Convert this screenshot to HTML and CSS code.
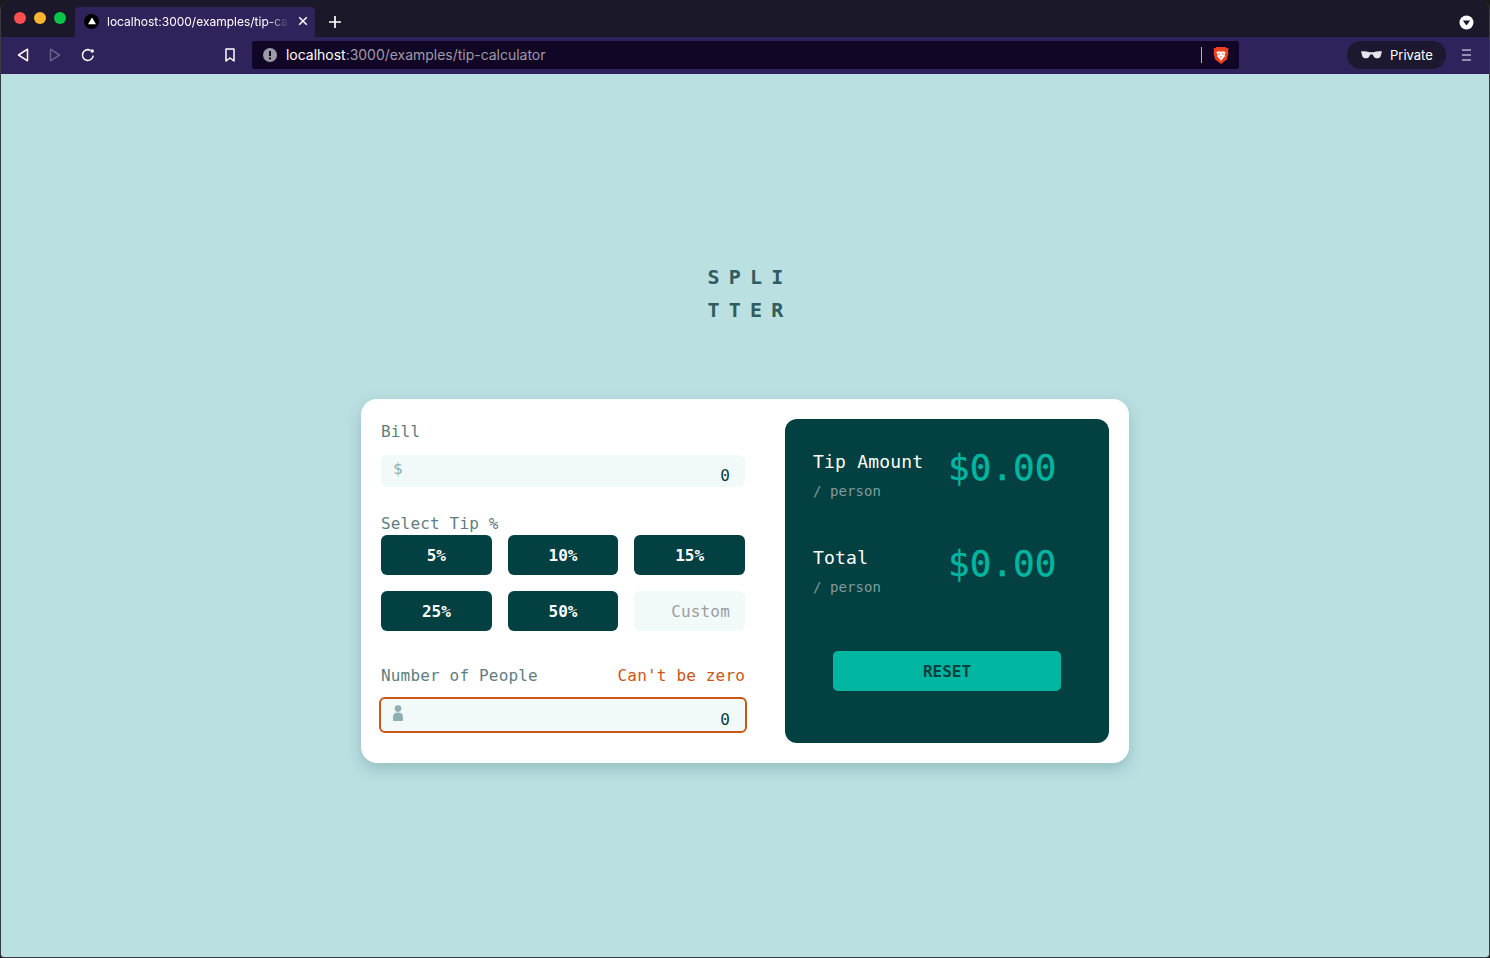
FILE: index.html
```html
<!DOCTYPE html>
<html lang="en">
<head>
    <meta charset="UTF-8">
    <meta name="viewport" content="width=device-width, initial-scale=1.0">
    <title>Tip Calculator</title>
    <link rel="stylesheet" href="styles.css">
</head>
<body>
    <div class="window">
        <div class="tabstrip">
            <div class="lights">
                <span class="light red"></span>
                <span class="light yellow"></span>
                <span class="light green"></span>
            </div>
            <div class="tab">
                <span class="favicon"><svg width="10" height="10" viewBox="0 0 10 10"><path d="M5 1.6 9 8.2H1z" fill="#fff"/></svg></span>
                <span class="tab-title">localhost:3000/examples/tip-ca</span>
                <svg class="tab-close" width="10" height="10" viewBox="0 0 10 10"><path d="M1.2 1.2l7.6 7.6M8.8 1.2L1.2 8.8" stroke="#fff" stroke-width="1.5"/></svg>
            </div>
            <svg class="new-tab" width="12" height="12" viewBox="0 0 12 12"><path d="M6 0v12M0 6h12" stroke="#fff" stroke-width="1.7"/></svg>
            <svg class="tab-menu" width="15" height="15" viewBox="0 0 15 15"><circle cx="7.5" cy="7.5" r="7" fill="#fff"/><path d="M3.8 5.6h7.4L7.5 10.6z" fill="#1b1829"/></svg>
        </div>

        <div class="toolbar">
            <div class="nav">
                <svg width="12" height="14" viewBox="0 0 12 14"><path d="M10.5 1.2v11.6L1.5 7z" fill="none" stroke="#fff" stroke-width="1.5" stroke-linejoin="round"/></svg>
                <svg width="12" height="14" viewBox="0 0 12 14"><path d="M1.5 1.2v11.6L10.5 7z" fill="none" stroke="#6a5f87" stroke-width="1.5" stroke-linejoin="round"/></svg>
                <svg width="14" height="14" viewBox="0 0 14 14"><path d="M12.2 7.6A5.4 5.400 0 1 1 9.400 2.300" fill="none" stroke="#fff" stroke-width="1.5"/><circle cx="11.200" cy="3" r="1.800" fill="#fff"/></svg>
            </div>
            <svg class="bookmark" width="10" height="14" viewBox="0 0 10 14"><path d="M1 1h8v12L5 10l-4 3z" fill="none" stroke="#fff" stroke-width="1.5" stroke-linejoin="round"/></svg>
            <div class="urlbar">
                <svg width="14" height="14" viewBox="0 0 14 14"><circle cx="7" cy="7" r="7" fill="#9b9aa6"/><path d="M7 3v5" stroke="#120626" stroke-width="2"/><circle cx="7" cy="10.4" r="1.1" fill="#120626"/></svg>
                <span class="url"><span class="url-host">localhost</span>:3000/examples/tip-calculator</span>
                <span class="url-sep"></span>
                <svg width="16" height="19" viewBox="0 0 16 19"><path d="M3.4 1h9.2l1 1.3 1.9-.3-.5 3.2.5 1.800-1.700 6.400-3 2.400L8 18l-2.800-2.200-3-2.400L.5 7l.5-1.800L.5 2l1.900.3z" fill="#f0401f"/><path d="M3.200 6.200l2.600-1 2.200.6 2.200-.6 2.600 1-1.300 2.300.6 1.500L9.800 12.500 8 14.800 6.200 12.500 4.100 10l.6-1.500z" fill="#fff"/><path d="M5.400 8h1.600M9 8h1.600M8 10v1.500" stroke="#f0401f" stroke-width="1"/></svg>
            </div>
            <div class="private">
                <svg width="21" height="8" viewBox="0 0 21 8"><path d="M0 .5c3-.6 6 0 8.500.8h4c2.500-.8 5.500-1.400 8.500-.8l-1.500 5.200c-1.500 2-5 2.200-6.500.3l-1.300-2.500h-2.400L8 6C6.500 7.900 3 7.700 1.500 5.700z" fill="#e6e6ea"/></svg>
                <span>Private</span>
            </div>
            <svg class="hamburger" width="11" height="12" viewBox="0 0 11 12"><path d="M1 1h9M1 6h9M1 11h9" stroke="#b9b3cb" stroke-width="1.600"/></svg>
        </div>

        <main class="page">
            <h1 class="logo">SPLITTER</h1>

            <section class="card">
                <div class="form">
                    <label class="label bill-label">Bill</label>
                    <div class="field">
                        <span class="field-icon">$</span>
                        <span class="field-value">0</span>
                    </div>

                    <div class="label tip-label">Select Tip %</div>
                    <div class="tips">
                        <button class="tip">5%</button>
                        <button class="tip">10%</button>
                        <button class="tip">15%</button>
                        <button class="tip">25%</button>
                        <button class="tip">50%</button>
                        <div class="tip custom">Custom</div>
                    </div>

                    <div class="people-head">
                        <span class="label">Number of People</span>
                        <span class="error">Can't be zero</span>
                    </div>
                    <div class="field field-error">
                        <svg class="person" width="10" height="16" viewBox="0 0 10 16"><circle cx="5" cy="3.600" r="3.300" fill="#8fb0b2"/><path d="M0 15v-3.500C0 9 2 7.500 5 7.500s5 1.500 5 4V15c0 .6-.4 1-1 1H1c-.6 0-1-.4-1-1z" fill="#8fb0b2"/></svg>
                        <span class="field-value">0</span>
                    </div>
                </div>

                <div class="summary">
                    <div class="row">
                        <div class="row-label">
                            <div class="row-name">Tip Amount</div>
                            <div class="row-unit">/ person</div>
                        </div>
                        <div class="amount">$0.00</div>
                    </div>
                    <div class="row">
                        <div class="row-label">
                            <div class="row-name">Total</div>
                            <div class="row-unit">/ person</div>
                        </div>
                        <div class="amount">$0.00</div>
                    </div>
                    <button class="reset">RESET</button>
                </div>
            </section>
        </main>
    </div>
</body>
</html>
```
FILE: styles.css
```css
* {
    box-sizing: border-box;
}
html, body {
    margin: 0;
    height: 100%;
    background: #1a1a1a;
}
body {
    font-family: "DejaVu Sans Mono", "Liberation Mono", monospace;
    overflow: hidden;
}
.window {
    height: 958px;
    display: flex;
    flex-direction: column;
    border: 1px solid #3a3a40;
    border-top: 0;
    border-radius: 10px 10px 4px 4px;
    overflow: hidden;
}

/* browser chrome */
.tabstrip {
    height: 37px;
    flex: none;
    display: flex;
    align-items: flex-end;
    background: #1a1829;
    position: relative;
}
.lights {
    display: flex;
    gap: 8px;
    margin: 0 9px 13px 13px;
}
.light {
    width: 12px;
    height: 12px;
    border-radius: 50%;
}
.red { background: #fc4f4f; }
.yellow { background: #fdb52f; }
.green { background: #0ac648; }
.tab {
    width: 240px;
    height: 30px;
    display: flex;
    align-items: center;
    padding: 0 7px 2px 9px;
    background: #30225a;
    border-radius: 4px 4px 0 0;
    color: #fff;
    font: 12px Inter, "Liberation Sans", sans-serif;
}
.favicon {
    width: 15px;
    height: 15px;
    flex: none;
    display: flex;
    align-items: center;
    justify-content: center;
    background: #000;
    border-radius: 50%;
    margin-right: 8px;
}
.tab-title {
    flex: 1;
    white-space: nowrap;
    -webkit-mask-image: linear-gradient(to right, #000 88%, transparent);
    mask-image: linear-gradient(to right, #000 88%, transparent);
}
.tab-close {
    margin-left: 9px;
    flex: none;
}
.new-tab {
    margin: 0 0 9px 14px;
}
.tab-menu {
    position: absolute;
    right: 15px;
    top: 15px;
}
.toolbar {
    height: 37px;
    flex: none;
    display: flex;
    align-items: center;
    padding: 0 0 1px 16px;
    background: #30225a;
}
.nav {
    display: flex;
    align-items: center;
    gap: 20px;
    width: 208px;
}
.bookmark {
    flex: none;
}
.urlbar {
    width: 987px;
    height: 28px;
    margin-left: 17px;
    display: flex;
    align-items: center;
    padding: 0 10px 0 11px;
    background: #120626;
    border-radius: 3px;
}
.url {
    flex: 1;
    margin-left: 9px;
    font: 14px/17px Inter, "Liberation Sans", sans-serif;
    letter-spacing: -0.02px;
    color: #9f9ba8;
    padding-bottom: 1px;
}
.url-host {
    color: #fff;
}
.url-sep {
    width: 1px;
    height: 16px;
    background: #b5b3bd;
    margin-right: 11px;
}
.private {
    width: 99px;
    height: 28px;
    margin-left: 108px;
    display: flex;
    align-items: center;
    gap: 8px;
    padding-left: 14px;
    background: #1c1830;
    border-radius: 14px;
    color: #fff;
    font: 13px Inter, "Liberation Sans", sans-serif;
}
.hamburger {
    margin-left: 15px;
}

/* the calculator */
.page {
    flex: 1;
    display: flex;
    flex-direction: column;
    align-items: center;
    background: #bbe0e2;
}
.logo {
    width: 85px;
    margin: 187px 0 72px 10px;
    color: #2f5d60;
    font-size: 20px;
    line-height: 33px;
    font-weight: 700;
    letter-spacing: 9.2px;
    word-break: break-all;
}
.card {
    width: 768px;
    height: 364px;
    display: flex;
    justify-content: space-between;
    padding: 20px;
    background: #fff;
    border-radius: 16px;
    box-shadow: 0 6px 16px rgba(0, 70, 75, 0.22);
}
.form {
    width: 364px;
}
.label {
    color: #5f7d80;
    font-size: 16px;
    letter-spacing: 0.17px;
    line-height: 26px;
}
.bill-label {
    display: block;
}
.field {
    height: 32px;
    display: flex;
    justify-content: space-between;
    margin-top: 10px;
    padding: 0 15px 0 12px;
    background: #f2f9f9;
    border-radius: 6px;
}
.field-icon {
    color: #8fb0b2;
    font-size: 16px;
    line-height: 28px;
}
.field-value {
    color: #024042;
    font-size: 16px;
    line-height: 42px;
}
.tip-label {
    margin-top: 24px;
    height: 24px;
}
.tips {
    display: grid;
    grid-template-columns: repeat(3, 1fr);
    gap: 16px;
}
.tip {
    height: 40px;
    display: flex;
    align-items: center;
    justify-content: center;
    border: 0;
    border-radius: 6px;
    background: #024042;
    color: #fff;
    font-family: inherit;
    font-size: 16px;
    font-weight: 700;
}
.custom {
    justify-content: flex-end;
    padding-right: 15px;
    background: #f2f9f9;
    color: #9a9ea3;
    font-weight: 400;
    letter-spacing: 0.17px;
}
.people-head {
    height: 24px;
    display: flex;
    justify-content: space-between;
    margin-top: 32px;
}
.error {
    color: #c9571a;
    font-size: 16px;
    letter-spacing: 0.17px;
    line-height: 26px;
}
.field-error {
    height: 36px;
    margin: 10px -2px 0;
    padding: 0 15px 0 12px;
    border: 2px solid #c9571a;
}
.person {
    margin-top: 6px;
}
.summary {
    width: 324px;
    padding: 32px 28px;
    background: #024042;
    border-radius: 12px;
}
.row {
    display: flex;
    gap: 25px;
    height: 96px;
}
.row-label {
    width: 110px;
    white-space: nowrap;
}
.row-name {
    color: #fff;
    font-size: 18px;
    letter-spacing: 0.2px;
    line-height: 22px;
}
.row-unit {
    margin-top: 8px;
    color: #7f9c9e;
    font-size: 14px;
    letter-spacing: 0.07px;
    line-height: 20px;
}
.amount {
    margin-top: -3px;
    color: #00b6a1;
    font-size: 36px;
    letter-spacing: 0.03px;
    line-height: 40px;
    -webkit-text-stroke: 0.4px #00b6a1;
}
.reset {
    display: block;
    width: 228px;
    height: 40px;
    margin: 8px 0 0 20px;
    border: 0;
    border-radius: 5px;
    background: #00b6a1;
    color: #024042;
    font-family: inherit;
    font-size: 16px;
    font-weight: 700;
}
```
